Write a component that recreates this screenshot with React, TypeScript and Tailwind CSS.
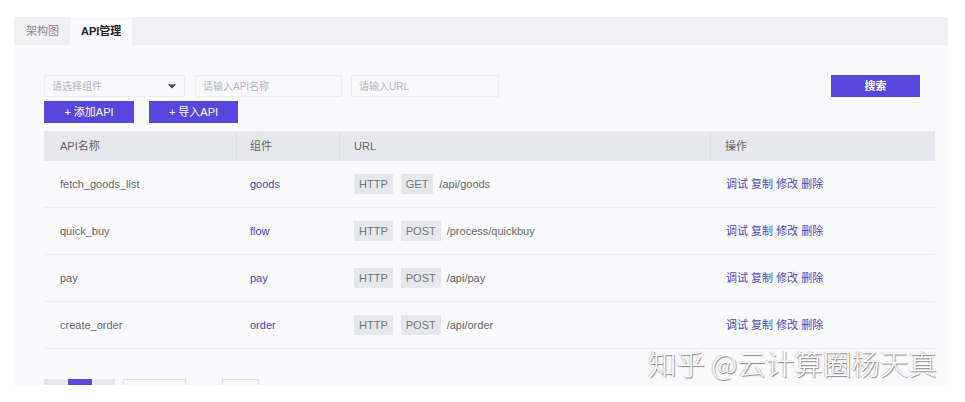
import { ChevronDown } from "lucide-react";

interface ApiRow {
  name: string;
  component: string;
  method: string;
  url: string;
}

const rows: ApiRow[] = [
  { name: "fetch_goods_list", component: "goods", method: "GET", url: "/api/goods" },
  { name: "quick_buy", component: "flow", method: "POST", url: "/process/quickbuy" },
  { name: "pay", component: "pay", method: "POST", url: "/api/pay" },
  { name: "create_order", component: "order", method: "POST", url: "/api/order" },
];

const font = "font-['Liberation_Sans','Noto_Sans_CJK_SC',sans-serif]";

export default function App() {
  return (
    <div className={`relative w-[965px] h-[402px] bg-white pt-[17px] ${font}`}>
      <div className="ml-[14px] w-[934px] h-[368px] overflow-hidden bg-[#fafafc]">
        {/* tabs */}
        <div className="flex h-[28px] items-stretch bg-[#f1f1f3] pl-[12px] text-[11px]">
          <div className="flex items-center pr-[11px] text-[#8a8a96]">架构图</div>
          <div className="flex items-center bg-[#fafafc] px-[11px] font-bold text-[#222]">API管理</div>
        </div>

        <div className="pl-[30px] pr-[13px] pt-[30px]">
          {/* filters */}
          <div className="flex items-center pr-[15px]">
            <div className="flex h-[22px] w-[141px] items-center justify-between border border-[#ededf2] bg-[#fafafc] pl-[7px] pr-[6px] text-[10px] text-[#b4b4c0]">
              <span>请选择组件</span>
              <ChevronDown className="h-3 w-3 fill-[#444] text-[#444]" strokeWidth={3} />
            </div>
            <div className="ml-[10px] flex h-[22px] w-[147px] items-center border border-[#ededf2] pl-[7px] text-[10px] text-[#b4b4c0]">
              请输入API名称
            </div>
            <div className="ml-[9px] flex h-[22px] w-[148px] items-center border border-[#ededf2] pl-[7px] text-[10px] text-[#b4b4c0]">
              请输入URL
            </div>
            <button className="ml-auto h-[22px] w-[89px] bg-[#5747dc] text-[11px] font-bold text-white">搜索</button>
          </div>

          <div className="mt-[4px] flex gap-[15px]">
            <button className="h-[22px] w-[90px] bg-[#5747dc] text-[11px] text-white">+ 添加API</button>
            <button className="h-[22px] w-[89px] bg-[#5747dc] text-[11px] text-white">+ 导入API</button>
          </div>

          {/* table */}
          <div className="mt-[8px] text-[11px]">
            <div className="flex h-[30px] items-center bg-[#e7e8ee] text-[#666]">
              <div className="flex h-full w-[193px] items-center border-r border-[#dcdde4] pl-[16px]">API名称</div>
              <div className="flex h-full w-[103px] items-center border-r border-[#dcdde4] pl-[13px]">组件</div>
              <div className="flex h-full w-[371px] items-center border-r border-[#dcdde4] pl-[14px]">URL</div>
              <div className="flex h-full flex-1 items-center pl-[14px]">操作</div>
            </div>
            {rows.map((r) => (
              <div key={r.name} className="flex h-[47px] items-center border-b border-[#efeff3] text-[#666]">
                <div className="w-[193px] pl-[16px]">{r.name}</div>
                <div className="w-[103px] pl-[13px] text-[#4a3fb8]">{r.component}</div>
                <div className="flex w-[371px] items-center pl-[14px] text-[#777]">
                  <span className="bg-[#e6e7ec] px-[5px] py-[2px]">HTTP</span>
                  <span className="ml-[8px] bg-[#e6e7ec] px-[5px] py-[2px]">{r.method}</span>
                  <span className="ml-[6px] text-[#666]">{r.url}</span>
                </div>
                <div className="flex-1 pl-[15px] text-[#5046b8]">
                  <span>调试</span> <span>复制</span> <span>修改</span> <span>删除</span>
                </div>
              </div>
            ))}
          </div>

          {/* pagination */}
          <div className="mt-[30px] flex items-start">
            <div className="flex h-[20px] w-[71px] bg-[#e6e7ec]">
              <div className="ml-[24px] h-full w-[24px] bg-[#5747dc]" />
            </div>
            <div className="ml-[8px] h-[20px] w-[63px] border border-[#e4e4ea] bg-[#fafafc]" />
            <div className="ml-[36px] h-[20px] w-[37px] border border-[#e4e4ea] bg-[#fafafc]" />
          </div>
        </div>
      </div>

      <div className="absolute left-[648px] top-[346px] whitespace-nowrap font-['Noto_Sans_CJK_SC',sans-serif] text-[28.5px] font-light leading-[34px] text-white [text-shadow:1px_1px_1px_rgba(0,0,0,0.45),-1px_0_1px_rgba(0,0,0,0.2)]">
        知乎 @云计算圈杨天真
      </div>
    </div>
  );
}
